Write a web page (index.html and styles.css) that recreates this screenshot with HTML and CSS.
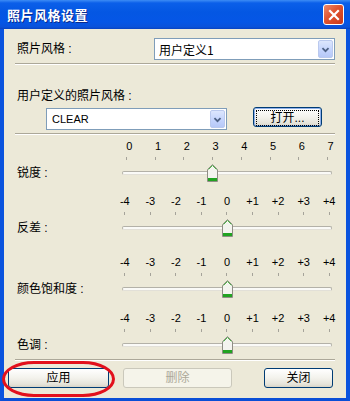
FILE: index.html
```html
<!DOCTYPE html>
<html lang="zh-CN">

<head>
  <meta charset="UTF-8">
  <title>照片风格设置</title>
  <link rel="stylesheet" href="styles.css">
</head>

<body>
  <div class="window">
    <div class="titlebar">
      <span class="title">照片风格设置</span>
      <span class="close">
        <svg width="18" height="18" viewBox="0 0 18 18">
          <path d="M5 5 L13 13 M13 5 L5 13" stroke="#fff" stroke-width="2.2" stroke-linecap="square" />
        </svg>
      </span>
    </div>

    <div class="client">
      <div class="style-row">
        <span class="label">照片风格 :</span>
        <div class="combo combo-main">
          <span class="combo-text">用户定义1</span>
          <span class="combo-arrow">
            <svg width="15" height="17" viewBox="0 0 15 17">
              <path d="M4 7 L7.5 10.5 L11 7" fill="none" stroke="#4D6185" stroke-width="2" />
            </svg>
          </span>
        </div>
      </div>

      <hr class="sep">

      <div class="label user-label">用户定义的照片风格 :</div>
      <div class="user-row">
        <div class="combo combo-user">
          <span class="combo-text latin">CLEAR</span>
          <span class="combo-arrow">
            <svg width="15" height="17" viewBox="0 0 15 17">
              <path d="M4 7 L7.5 10.5 L11 7" fill="none" stroke="#4D6185" stroke-width="2" />
            </svg>
          </span>
        </div>
        <button class="btn btn-default" type="button"><span class="focus">打开...</span></button>
      </div>

      <hr class="sep">

      <!-- 锐度 0..7 -->
      <div class="slider first">
        <span class="slider-label">锐度 :</span>
        <div class="scale">
          <div class="nums pos" style="grid-template-columns: repeat(8, 1fr)">
            <span>0</span><span>1</span><span>2</span><span>3</span><span>4</span><span>5</span><span>6</span><span>7</span>
          </div>
          <div class="ticks" style="grid-template-columns: repeat(8, 1fr)">
            <i></i><i></i><i></i><i></i><i></i><i></i><i></i><i></i>
          </div>
          <div class="track-row">
            <div class="track">
              <span class="thumb" style="left: 43%">
                <svg width="11" height="18" viewBox="0 0 11 18">
                  <path d="M0.5 5.5 L5.5 0.5 L10.5 5.5 L10.5 17.5 L0.5 17.5 Z" fill="#F4F4EF" stroke="#8F8D84" />
                  <path d="M1.5 5.5 L5.5 1.5 L9.5 5.5" fill="none" stroke="#4FB848" />
                  <rect x="1" y="14" width="9" height="3" fill="#21A321" />
                </svg>
              </span>
            </div>
          </div>
        </div>
      </div>

      <!-- 反差 -4..+4 -->
      <div class="slider second">
        <span class="slider-label">反差 :</span>
        <div class="scale">
          <div class="nums" style="grid-template-columns: repeat(9, 1fr)">
            <span>-4</span><span>-3</span><span>-2</span><span>-1</span><span>0</span><span>+1</span><span>+2</span><span>+3</span><span>+4</span>
          </div>
          <div class="ticks" style="grid-template-columns: repeat(9, 1fr)">
            <i></i><i></i><i></i><i></i><i></i><i></i><i></i><i></i><i></i>
          </div>
          <div class="track-row">
            <div class="track">
              <span class="thumb" style="left: 50%">
                <svg width="11" height="18" viewBox="0 0 11 18">
                  <path d="M0.5 5.5 L5.5 0.5 L10.5 5.5 L10.5 17.5 L0.5 17.5 Z" fill="#F4F4EF" stroke="#8F8D84" />
                  <path d="M1.5 5.5 L5.5 1.5 L9.5 5.5" fill="none" stroke="#4FB848" />
                  <rect x="1" y="14" width="9" height="3" fill="#21A321" />
                </svg>
              </span>
            </div>
          </div>
        </div>
      </div>

      <!-- 颜色饱和度 -4..+4 -->
      <div class="slider third">
        <span class="slider-label">颜色饱和度 :</span>
        <div class="scale">
          <div class="nums" style="grid-template-columns: repeat(9, 1fr)">
            <span>-4</span><span>-3</span><span>-2</span><span>-1</span><span>0</span><span>+1</span><span>+2</span><span>+3</span><span>+4</span>
          </div>
          <div class="ticks" style="grid-template-columns: repeat(9, 1fr)">
            <i></i><i></i><i></i><i></i><i></i><i></i><i></i><i></i><i></i>
          </div>
          <div class="track-row">
            <div class="track">
              <span class="thumb" style="left: 50%">
                <svg width="11" height="18" viewBox="0 0 11 18">
                  <path d="M0.5 5.5 L5.5 0.5 L10.5 5.5 L10.5 17.5 L0.5 17.5 Z" fill="#F4F4EF" stroke="#8F8D84" />
                  <path d="M1.5 5.5 L5.5 1.5 L9.5 5.5" fill="none" stroke="#4FB848" />
                  <rect x="1" y="14" width="9" height="3" fill="#21A321" />
                </svg>
              </span>
            </div>
          </div>
        </div>
      </div>

      <!-- 色调 -4..+4 -->
      <div class="slider fourth">
        <span class="slider-label">色调 :</span>
        <div class="scale">
          <div class="nums" style="grid-template-columns: repeat(9, 1fr)">
            <span>-4</span><span>-3</span><span>-2</span><span>-1</span><span>0</span><span>+1</span><span>+2</span><span>+3</span><span>+4</span>
          </div>
          <div class="ticks" style="grid-template-columns: repeat(9, 1fr)">
            <i></i><i></i><i></i><i></i><i></i><i></i><i></i><i></i><i></i>
          </div>
          <div class="track-row">
            <div class="track">
              <span class="thumb" style="left: 50%">
                <svg width="11" height="18" viewBox="0 0 11 18">
                  <path d="M0.5 5.5 L5.5 0.5 L10.5 5.5 L10.5 17.5 L0.5 17.5 Z" fill="#F4F4EF" stroke="#8F8D84" />
                  <path d="M1.5 5.5 L5.5 1.5 L9.5 5.5" fill="none" stroke="#4FB848" />
                  <rect x="1" y="14" width="9" height="3" fill="#21A321" />
                </svg>
              </span>
            </div>
          </div>
        </div>
      </div>

      <hr class="sep sep-bottom">

      <div class="buttons">
        <button class="btn btn-apply" type="button">应用</button>
        <button class="btn btn-delete" type="button" disabled>删除</button>
        <button class="btn btn-close" type="button">关闭</button>
      </div>
    </div>

    <!-- red annotation round the apply button -->
    <div class="mark"></div>
  </div>
</body>

</html>
```

FILE: styles.css
```css
body {
  margin: 0;
  font-family: "Liberation Sans", "Noto Sans CJK SC", sans-serif;
  font-size: 12px;
  color: #000;
}

.window {
  width: 350px;
  height: 401px;
  display: flex;
  flex-direction: column;
  position: relative;
  overflow: hidden;
}

/* title bar */
.titlebar {
  height: 29px;
  flex-shrink: 0;
  display: flex;
  align-items: center;
  padding: 0 6px 0 7px;
  background: linear-gradient(#3D8CF5 0, #0B5FE9 3px, #0457E3 12px, #0556E6 22px, #0A52DA 27px, #0842C0 29px);
}

.title {
  color: #fff;
  font-family: "Noto Sans CJK SC", sans-serif;
  font-weight: bold;
  font-size: 13px;
  letter-spacing: 0.5px;
  text-shadow: 1px 1px #0A2A8C;
}

.close {
  margin-left: auto;
  width: 19px;
  height: 19px;
  border: 1px solid #fff;
  border-radius: 3px;
  background: linear-gradient(135deg, #EE8A6C 0, #E0532F 45%, #C9381B 100%);
  display: flex;
  align-items: center;
  justify-content: center;
}

/* client area */
.client {
  flex: 1;
  background: #ECE9D8;
  border-left: 4px solid #0A53DE;
  border-right: 4px solid #0A53DE;
  border-bottom: 3px solid #0A4ED6;
  padding: 0 11px;
}

.label {
  padding-left: 2px;
  line-height: 16px;
}

.style-row {
  display: flex;
  align-items: center;
  margin-top: 9px;
}

.style-row .label {
  width: 137px;
}

.combo {
  height: 22px;
  box-sizing: border-box;
  border: 1px solid #7F9DB9;
  background: #fff;
  display: flex;
  align-items: center;
  padding: 1px;
}

.combo-main {
  width: 181px;
}

.combo-user {
  width: 181px;
  margin-left: 31px;
}

.combo-text {
  flex: 1;
  padding-left: 3px;
  font-family: "Noto Sans CJK SC", sans-serif;
  font-size: 12px;
}

.combo-text.latin {
  font-family: "Liberation Sans", sans-serif;
  font-size: 11px;
  padding-left: 4px;
}

.combo-arrow {
  width: 15px;
  height: 18px;
  border: 1px solid #BAC9EE;
  border-radius: 2px;
  background: linear-gradient(#DCE6FD, #C3D3FD 60%, #B6C8F7);
  display: flex;
  box-sizing: border-box;
}

.sep {
  border: 0;
  border-top: 1px solid #ACA899;
  border-bottom: 1px solid #fff;
  margin: 3px 0 0 0;
  height: 0;
}

.user-label {
  margin-top: 23px;
}

.user-row {
  display: flex;
  align-items: flex-start;
  margin-top: 4px;
}

/* buttons */
.btn {
  height: 20px;
  box-sizing: border-box;
  border: 1px solid #003C74;
  border-radius: 3px;
  background: linear-gradient(#FFFFFF, #F3F2EC 50%, #E5E3D9 85%, #D8D4C6);
  font-family: "Liberation Sans", "Noto Sans CJK SC", sans-serif;
  font-size: 12px;
  line-height: 16px;
  padding: 0;
  color: #000;
}

.btn-default {
  width: 69px;
  margin-left: 26px;
  margin-top: -1px;
  box-shadow: inset 0 0 0 1px #8FB0EA;
  padding: 2px;
}

.btn-default .focus {
  display: block;
  height: 14px;
  line-height: 14px;
  border: 1px dotted #000;
}

.slider {
  display: flex;
  align-items: flex-end;
}

.slider.first {
  margin-top: 5px;
}

.slider.second {
  margin-top: 14px;
}

.slider.third {
  margin-top: 20px;
}

.slider.fourth {
  margin-top: 15px;
}

.slider-label {
  width: 95px;
  padding-left: 2px;
  flex-shrink: 0;
  line-height: 16px;
}

.scale {
  width: 230px;
  flex-shrink: 0;
}

.nums {
  display: grid;
  height: 13px;
  line-height: 13px;
  font-size: 11px;
  text-align: center;
}

.nums.pos span {
  padding-left: 6px;
}

.ticks {
  display: grid;
  height: 3px;
  margin-top: 4px;
}

.ticks i {
  width: 1px;
  height: 3px;
  background: #A5A39A;
  justify-self: center;
}

.track-row {
  height: 16px;
  margin-top: 5px;
  display: flex;
  align-items: center;
  padding: 0 10px;
}

.track {
  flex: 1;
  height: 4px;
  box-sizing: border-box;
  border: 1px solid #B3B1A8;
  border-bottom-color: #E2E0D8;
  border-radius: 2px;
  background: #FAFAF7;
  position: relative;
}

.thumb {
  position: absolute;
  top: -8px;
  width: 11px;
  height: 18px;
  margin-left: -5px;
  display: block;
}

.thumb svg {
  display: block;
}

.sep-bottom {
  margin-top: 6px;
}

.buttons {
  display: flex;
  margin: 7px 2px 0 -7px;
}

.btn-apply {
  width: 101px;
}

.btn-delete {
  width: 109px;
  margin-left: 14px;
  border-color: #CAC8BB;
  background: #F5F4EA;
  color: #ACA899;
}

.btn-close {
  width: 69px;
  margin-left: auto;
}

.mark {
  position: absolute;
  left: 2px;
  top: 361px;
  width: 113px;
  height: 36px;
  box-sizing: border-box;
  border: 3px solid #E2101C;
  border-radius: 32px / 18px;
}
```
